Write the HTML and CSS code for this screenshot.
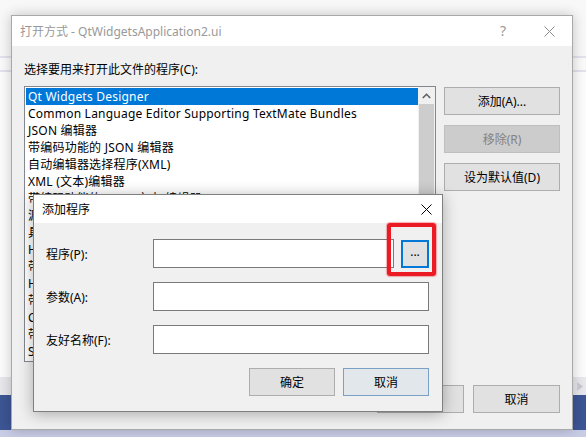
FILE: index.html
```html
<!DOCTYPE html>
<html lang="zh-CN">
<head>
    <meta charset="UTF-8">
    <title>打开方式 - QtWidgetsApplication2.ui</title>
    <link rel="stylesheet" href="styles.css">
</head>
<body>
    <div class="window open-with">
        <div class="titlebar">
            <span class="title">打开方式 - QtWidgetsApplication2.ui</span>
            <span class="tb-help">?</span>
            <span class="tb-close">
                <svg width="11" height="11" viewBox="0 0 11 11"><path d="M0.5 0.5 L10.5 10.5 M10.5 0.5 L0.5 10.5" stroke="#8c8c8c" stroke-width="1"/></svg>
            </span>
        </div>
        <div class="open-body">
            <div class="prompt">选择要用来打开此文件的程序(C):</div>
            <div class="main-row">
                <div class="listbox">
                    <ul class="items">
                        <li class="selected">Qt Widgets Designer</li>
                        <li>Common Language Editor Supporting TextMate Bundles</li>
                        <li>JSON 编辑器</li>
                        <li>带编码功能的 JSON 编辑器</li>
                        <li>自动编辑器选择程序(XML)</li>
                        <li>XML (文本)编辑器</li>
                        <li>带编码功能的 XML (文本)编辑器</li>
                        <li>源代码(文本)编辑器</li>
                        <li>具有编码功能的源代码(文本)编辑器</li>
                        <li>HTML 编辑器</li>
                        <li>带编码功能的 HTML 编辑器</li>
                        <li>HTML (Web 窗体)编辑器</li>
                        <li>带编码功能的 HTML (Web 窗体)编辑器</li>
                        <li>CSS 编辑器</li>
                        <li>带编码功能的 CSS 编辑器</li>
                        <li>SCSS 编辑器</li>
                    </ul>
                    <div class="vscroll">
                        <span class="arrow">
                            <svg width="9" height="6" viewBox="0 0 9 6"><path d="M0.8 5 L4.5 1.3 L8.2 5" fill="none" stroke="#606060" stroke-width="1.6"/></svg>
                        </span>
                        <span class="thumb"></span>
                    </div>
                </div>
                <div class="side-buttons">
                    <button class="btn">添加(A)...</button>
                    <button class="btn" disabled>移除(R)</button>
                    <button class="btn">设为默认值(D)</button>
                </div>
            </div>
            <div class="footer">
                <button class="btn">确定</button>
                <button class="btn">取消</button>
            </div>
        </div>
    </div>

    <!-- bit of the editor behind, peeking out on the right -->
    <svg class="desk-arrow" width="6" height="9" viewBox="0 0 6 9"><path d="M0 0 L6 4.5 L0 9 Z" fill="#c4c4cc"/></svg>

    <!-- modal dialog sitting on top of the open-with window -->
    <div class="window add-program">
        <div class="titlebar">
            <span class="title">添加程序</span>
            <span class="tb-close">
                <svg width="11" height="11" viewBox="0 0 11 11"><path d="M0.5 0.5 L10.5 10.5 M10.5 0.5 L0.5 10.5" stroke="#000" stroke-width="1"/></svg>
            </span>
        </div>
        <div class="add-body">
            <div class="field">
                <label>程序(P):</label>
                <input type="text" class="input short">
                <button class="btn browse">...</button>
            </div>
            <div class="field">
                <label>参数(A):</label>
                <input type="text" class="input">
            </div>
            <div class="field">
                <label>友好名称(F):</label>
                <input type="text" class="input">
            </div>
            <div class="footer">
                <button class="btn">确定</button>
                <button class="btn focused">取消</button>
            </div>
        </div>
        <div class="highlight"></div>
    </div>
</body>
</html>
```

FILE: styles.css
```css
* {
    margin: 0;
    padding: 0;
    box-sizing: border-box;
}

body {
    width: 586px;
    height: 437px;
    overflow: hidden;
    position: relative;
    padding: 15px 0 0 11px;
    font-family: 'Noto Sans', 'Noto Sans CJK SC', sans-serif;
    font-size: 12px;
    color: #000;
    /* desktop behind the dialogs */
    background: linear-gradient(to bottom,
        #f8f8f8 0, #f8f8f8 56px,
        #e2e2ee 56px, #e2e2ee 58px,
        #fafafa 58px, #fafafa 70px,
        #e2e2ee 70px, #e2e2ee 72px,
        #fcfcfc 72px, #fcfcfc 377px,
        #e7e7ec 377px, #e7e7ec 395px,
        #3c5594 395px, #3c5594 430px,
        #c8cce5 430px);
}

.desk-arrow {
    position: absolute;
    left: 577px;
    top: 382px;
}

.window {
    background: #f0f0f0;
    display: flex;
    flex-direction: column;
}

.titlebar {
    background: #fff;
    display: flex;
    align-items: center;
    flex-shrink: 0;
}

.btn {
    font-family: inherit;
    font-size: 12px;
    color: #000;
    background: #e1e1e1;
    border: 1px solid #adadad;
    height: 28px;
}

.btn:disabled {
    background: #cccccc;
    border-color: #bfbfbf;
    color: #838383;
}

/* Open with window */
.open-with {
    width: 562px;
    height: 415px;
    border: 1px solid #a9a9a9;
    box-shadow: 0 0 12px rgba(0,0,0,0.22);
}

.open-with .titlebar {
    height: 30px;
    padding-left: 8px;
}

.open-with .title {
    color: #999;
    flex: 1;
}

.tb-help {
    color: #999;
    font-size: 14px;
    width: 46px;
    text-align: center;
    margin-top: -1px;
}

.open-with .tb-close {
    width: 46px;
    display: flex;
    justify-content: center;
}

.open-body {
    flex: 1;
    padding: 14px 12px 16px 12px;
    display: flex;
    flex-direction: column;
}

.prompt {
    height: 20px;
    line-height: 20px;
    margin-bottom: 6px;
}

.main-row {
    display: flex;
    gap: 8px;
}

.listbox {
    width: 412px;
    height: 276px;
    background: #fff;
    border: 1px solid #828790;
    display: flex;
    overflow: hidden;
}

.items {
    list-style: none;
    flex: 1;
    padding: 1px 0 0 1px;
}

.items li {
    height: 17px;
    line-height: 17px;
    padding-left: 2px;
    letter-spacing: 0.22px;
    white-space: nowrap;
    overflow: hidden;
}

.items li.selected {
    background: #0078d7;
    color: #fff;
}

.vscroll {
    width: 17px;
    background: #f0f0f0;
    display: flex;
    flex-direction: column;
    align-items: center;
}

.vscroll .arrow {
    height: 17px;
    display: flex;
    align-items: center;
    justify-content: center;
}

.vscroll .thumb {
    width: 15px;
    flex: 1;
    background: #cdcdcd;
    margin-bottom: 40px;
}

.side-buttons {
    width: 116px;
    display: flex;
    flex-direction: column;
    gap: 10px;
    padding-top: 1px;
}

.open-body .footer {
    margin-top: auto;
    display: flex;
    justify-content: flex-end;
    gap: 9px;
}

.open-body .footer .btn {
    width: 87px;
}

/* Add program dialog */
.add-program {
    position: absolute;
    left: 33px;
    top: 194px;
    width: 410px;
    height: 218px;
    border: 1px solid #7f7f7f;
    box-shadow: 0 2px 14px rgba(0,0,0,0.3);
}

.add-program .titlebar {
    height: 28px;
    padding-left: 8px;
}

.add-program .title {
    flex: 1;
}

.add-program .tb-close {
    width: 30px;
    display: flex;
    justify-content: center;
    padding-right: 2px;
}

.add-body {
    flex: 1;
    padding: 16px 13px 16px 12px;
    display: flex;
    flex-direction: column;
    gap: 14px;
}

.field {
    display: flex;
    align-items: center;
    height: 29px;
}

.field label {
    width: 107px;
}

.input {
    width: 276px;
    height: 29px;
    border: 1px solid #7a7a7a;
    background: #fff;
    outline: none;
}

.input.short {
    width: 241px;
}

.browse {
    width: 28px;
    margin-left: 7px;
    height: 28px;
    border: 2px solid #0078d7;
    line-height: 1;
    padding-bottom: 4px;
}

.add-body .footer {
    margin-top: auto;
    display: flex;
    justify-content: flex-end;
    gap: 8px;
}

.add-body .footer .btn {
    width: 86px;
}

.btn.focused {
    background: #e2e7ec;
    border-color: #7aa0c6;
}

/* red annotation box around the browse button */
.highlight {
    position: absolute;
    left: 353px;
    top: 28px;
    width: 49px;
    height: 53px;
    border: 4px solid #ea1b24;
    border-radius: 3px;
    box-shadow: 0 0 1px 1px rgba(234,27,36,0.35);
}
```
